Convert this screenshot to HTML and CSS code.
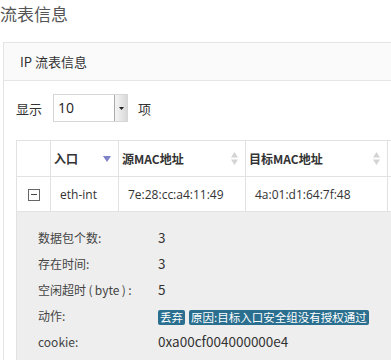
FILE: index.html
```html
<!DOCTYPE html>
<html lang="zh-CN">
<head>
    <meta charset="UTF-8">
    <meta name="viewport" content="width=device-width, initial-scale=1.0">
    <title>流表信息</title>
    <link rel="stylesheet" href="styles.css">
</head>
<body>
    <h1 class="page-title">流表信息</h1>
    <div class="panel">
        <div class="panel-heading">IP 流表信息</div>
        <div class="panel-body">
            <div class="length-row">
                <span>显示</span>
                <div class="select">
                    <span class="select-value">10</span>
                    <span class="select-btn">
                        <svg width="5" height="3" viewBox="0 0 5 3"><path d="M0 0H5L2.5 3Z" fill="#222"/></svg>
                    </span>
                </div>
                <span>项</span>
            </div>

            <table class="flow-table">
                <colgroup>
                    <col class="c-toggle">
                    <col class="c-port">
                    <col class="c-src">
                    <col class="c-dst">
                    <col class="c-more">
                </colgroup>
                <thead>
                    <tr>
                        <th></th>
                        <th>
                            <div class="th-inner">入口
                                <svg class="sort" width="8" height="6" viewBox="0 0 8 6"><path d="M0 0H8L4 6Z" fill="#7f82c8"/></svg>
                            </div>
                        </th>
                        <th>
                            <div class="th-inner">源MAC地址
                                <svg class="sort" width="7" height="13" viewBox="0 0 7 13"><path d="M0 5.5L3.5 0L7 5.5Z M0 7.5H7L3.5 13Z" fill="#d4d4d4"/></svg>
                            </div>
                        </th>
                        <th>
                            <div class="th-inner">目标MAC地址
                                <svg class="sort" width="7" height="13" viewBox="0 0 7 13"><path d="M0 5.5L3.5 0L7 5.5Z M0 7.5H7L3.5 13Z" fill="#d4d4d4"/></svg>
                            </div>
                        </th>
                        <th></th>
                    </tr>
                </thead>
                <tbody>
                    <tr class="flow-row">
                        <td class="toggle">
                            <span class="minus-box"></span>
                        </td>
                        <td>eth-int</td>
                        <td>7e:28:cc:a4:11:49</td>
                        <td>4a:01:d1:64:7f:48</td>
                        <td></td>
                    </tr>
                    <tr class="detail-row">
                        <td colspan="5">
                            <div class="detail">
                                <div class="detail-item"><span class="label">数据包个数:</span><span class="value">3</span></div>
                                <div class="detail-item"><span class="label">存在时间:</span><span class="value">3</span></div>
                                <div class="detail-item"><span class="label">空闲超时&thinsp;(&thinsp;byte&thinsp;)&thinsp;:</span><span class="value">5</span></div>
                                <div class="detail-item"><span class="label">动作:</span><span class="value"><span class="badge">丢弃</span><span class="badge">原因:目标入口安全组没有授权通过</span></span></div>
                                <div class="detail-item"><span class="label">cookie:</span><span class="value">0xa00cf004000000e4</span></div>
                            </div>
                        </td>
                    </tr>
                </tbody>
            </table>
        </div>
    </div>
</body>
</html>
```

FILE: styles.css
```css
html, body {
    overflow: hidden;
}
body {
    margin: 0;
    width: 391px;
    font-family: "Noto Sans CJK SC", "Noto Sans", sans-serif;
    color: #333;
    background: #fff;
}
.page-title {
    margin: 0 0 14px 0;
    font-size: 17px;
    font-weight: normal;
    line-height: 28px;
    color: #555;
}
.panel {
    margin-left: 3px;
    border: 1px solid #e3e3e3;
    border-right: none;
    border-bottom: none;
}
.panel-heading {
    height: 37px;
    line-height: 37px;
    padding-left: 16px;
    font-size: 13px;
    color: #333;
    background: #fafafa;
    border-bottom: 1px solid #e6e6e6;
}
.panel-body {
    padding: 13px 0 0 12px;
}
.length-row {
    display: flex;
    align-items: center;
    gap: 10px;
    height: 28px;
    font-size: 13px;
    color: #333;
}
.select {
    display: flex;
    width: 75px;
    height: 28px;
    box-sizing: border-box;
    border: 1px solid #d6d6d6;
    margin-left: 1px;
}
.select-value {
    flex: 1;
    padding-left: 4px;
    line-height: 26px;
    font-family: "Open Sans", sans-serif;
    font-size: 14px;
    color: #222;
}
.select-btn {
    width: 12px;
    display: flex;
    align-items: center;
    justify-content: center;
    border-left: 1px solid #aaa;
    background: linear-gradient(to right, #f4f4f4, #d9d9d9);
}
.flow-table {
    margin-top: 18px;
    table-layout: fixed;
    width: 375px;
    border-collapse: collapse;
}
.c-toggle { width: 34px; }
.c-port { width: 68px; }
.c-src { width: 127px; }
.c-dst { width: 142px; }
.c-more { width: 4px; }
.flow-table th,
.flow-table td {
    border: 1px solid #e2e2e2;
    padding: 0;
}
.flow-table th {
    height: 35px;
    font-size: 12px;
    font-weight: bold;
    color: #333;
    text-align: left;
}
.th-inner {
    display: flex;
    align-items: center;
    justify-content: space-between;
    padding: 0 7px 0 3px;
}
.flow-row td {
    height: 34px;
    padding-left: 9px;
    font-family: "Open Sans", "Noto Sans CJK SC", sans-serif;
    font-size: 12px;
    color: #333;
}
.flow-row td.toggle {
    padding: 0;
    text-align: center;
}
.minus-box {
    display: inline-block;
    position: relative;
    width: 10px;
    height: 10px;
    border: 1px solid #666;
    vertical-align: middle;
}
.minus-box::after {
    content: "";
    position: absolute;
    left: 2px;
    right: 2px;
    top: 4px;
    height: 1px;
    background: #444;
}
.detail-row td {
    background: #eee;
    height: 148px;
    border-bottom: none;
    vertical-align: top;
}
.detail {
    padding: 12px 0 0 21px;
}
.detail-item {
    display: flex;
    align-items: center;
    height: 26px;
}
.label {
    width: 120px;
    font-size: 12px;
    color: #444;
}
.value {
    font-size: 13.5px;
    color: #333;
}
.badge {
    display: inline-block;
    margin-right: 4px;
    padding: 0 2px;
    height: 15px;
    line-height: 15px;
    font-size: 11.5px;
    color: #fff;
    background: #2a6f8f;
    border-radius: 2px;
    vertical-align: middle;
}
```
